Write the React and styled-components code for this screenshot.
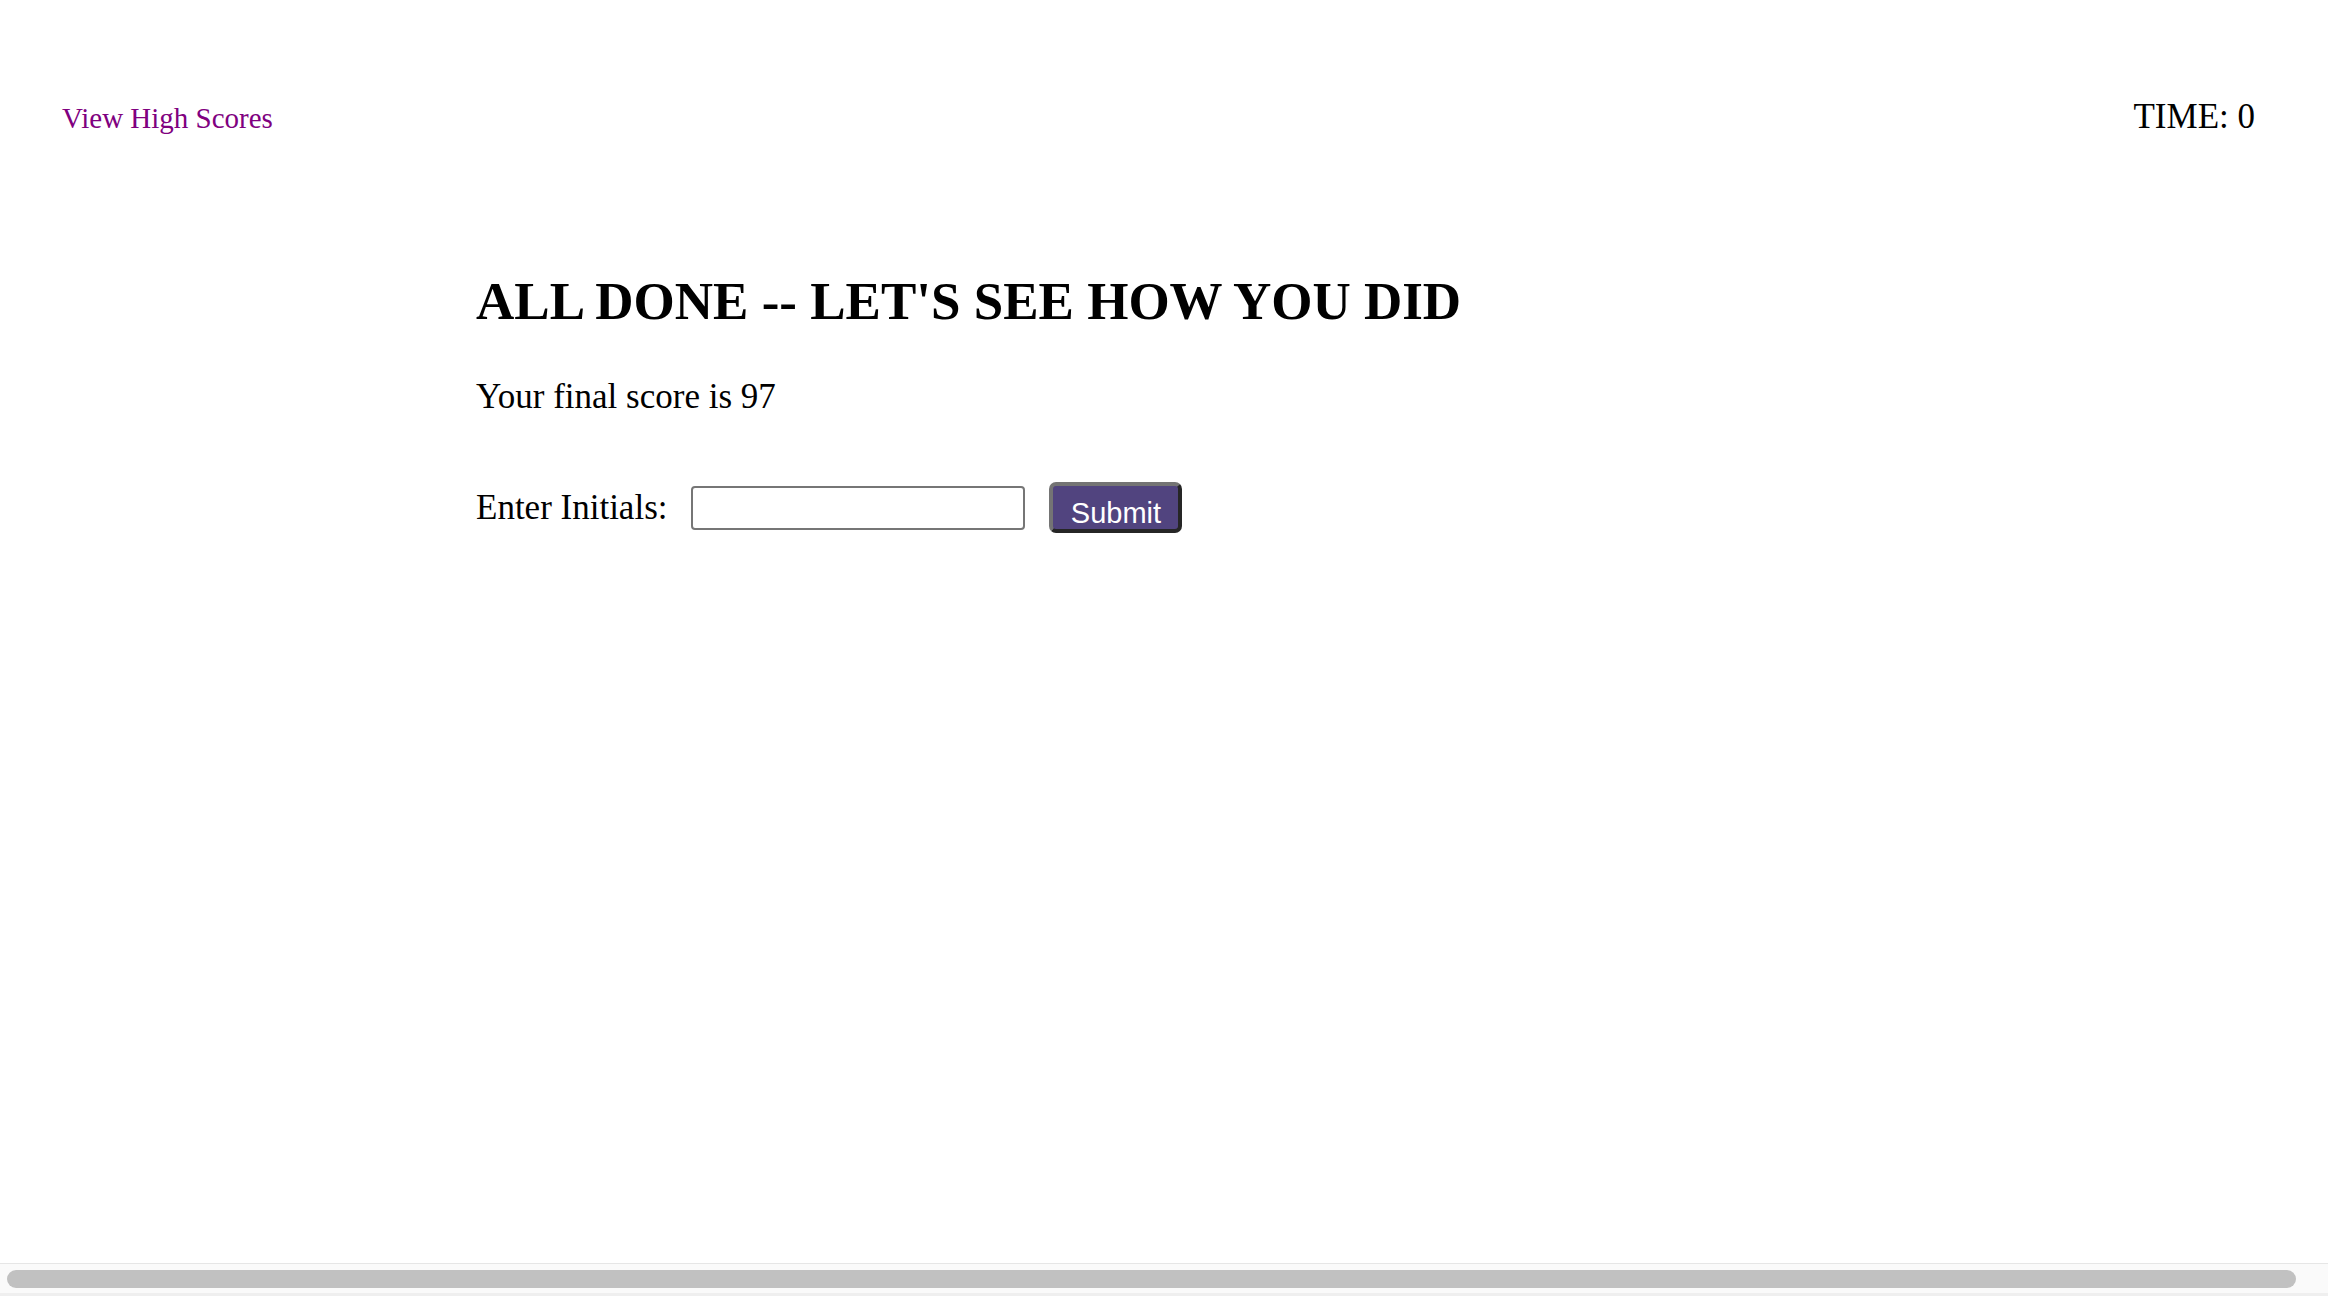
import React, { useState } from 'react';
import styled, { createGlobalStyle } from 'styled-components';

const GlobalStyle = createGlobalStyle`
  html, body {
    margin: 0;
    padding: 0;
    background: #ffffff;
  }

  body {
    font-family: 'Liberation Serif', 'Times New Roman', serif;
    color: #000000;
    overflow: hidden;
  }
`;

const Page = styled.div`
  width: 100vw;
  height: 100vh;
  position: relative;
`;

const Header = styled.header`
  display: flex;
  justify-content: space-between;
  align-items: baseline;
  padding: 97px 73px 0 62px;
`;

const HighScoresLink = styled.a`
  color: #800080;
  font-size: 29px;
  text-decoration: none;
  cursor: pointer;
`;

const Timer = styled.div`
  font-size: 35px;
  line-height: 1.15;
`;

const Main = styled.main`
  padding: 134px 0 0 476px;
`;

const Title = styled.h1`
  margin: 0;
  font-size: 53px;
  line-height: 1.15;
  font-weight: 700;
`;

const Score = styled.p`
  margin: 45px 0 0;
  font-size: 35px;
  line-height: 1.15;
`;

const Form = styled.form`
  display: flex;
  align-items: center;
  gap: 24px;
  margin-top: 65px;
`;

const Label = styled.label`
  font-size: 35px;
  line-height: 1.15;
`;

const Input = styled.input`
  box-sizing: border-box;
  width: 334px;
  height: 44px;
  border: 2px solid #767676;
  border-radius: 4px;
  padding: 0 8px;
  font-size: 26px;
  font-family: 'Liberation Sans', Arial, sans-serif;

  &:focus {
    outline: none;
  }
`;

const SubmitButton = styled.button`
  box-sizing: border-box;
  width: 133px;
  height: 51px;
  padding: 11px 0 0;
  background: #51447f;
  color: #ffffff;
  border: 4px solid;
  border-color: #747474 #262626 #262626 #747474;
  border-radius: 7px;
  font-family: 'Liberation Sans', Arial, sans-serif;
  font-size: 29px;
  line-height: 1;
  cursor: pointer;
`;

const ScrollTrack = styled.div`
  position: fixed;
  left: 0;
  right: 0;
  bottom: 0;
  height: 33px;
  box-sizing: border-box;
  background: #fafafa;
  border-top: 1px solid #e6e6e6;
  border-bottom: 3px solid #efefef;
  display: flex;
  align-items: center;
  padding: 0 32px 0 7px;
`;

const ScrollThumb = styled.div`
  flex: 1;
  height: 18px;
  border-radius: 9px;
  background: #c1c1c1;
`;

export default function App() {
  const [initials, setInitials] = useState('');

  return (
    <>
      <GlobalStyle />
      <Page>
        <Header>
          <HighScoresLink href="#">View High Scores</HighScoresLink>
          <Timer>TIME: 0</Timer>
        </Header>
        <Main>
          <Title>ALL DONE -- LET'S SEE HOW YOU DID</Title>
          <Score>Your final score is 97</Score>
          <Form onSubmit={(e) => e.preventDefault()}>
            <Label htmlFor="initials">Enter Initials:</Label>
            <Input
              id="initials"
              type="text"
              value={initials}
              onChange={(e) => setInitials(e.target.value)}
            />
            <SubmitButton type="submit">Submit</SubmitButton>
          </Form>
        </Main>
        <ScrollTrack>
          <ScrollThumb />
        </ScrollTrack>
      </Page>
    </>
  );
}
